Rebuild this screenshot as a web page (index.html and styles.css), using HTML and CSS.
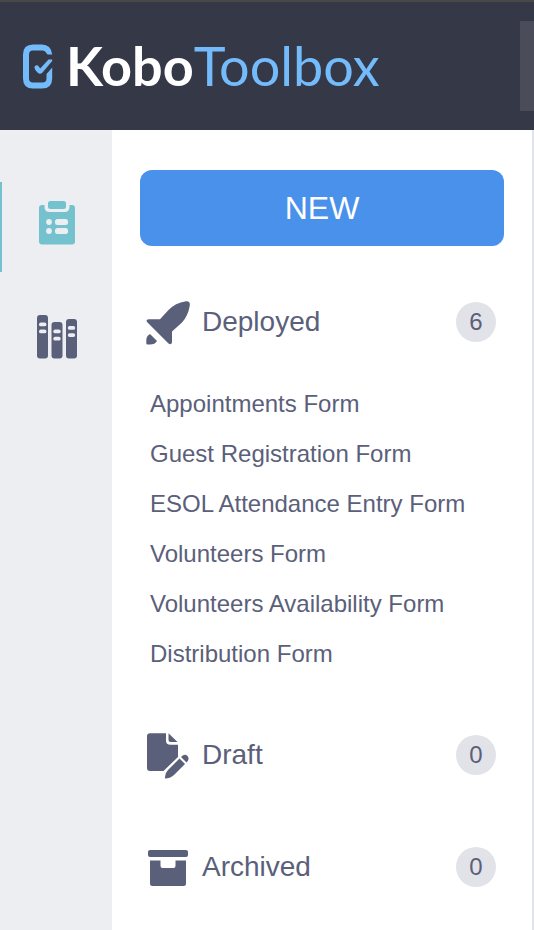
FILE: index.html
```html
<!DOCTYPE html>
<html lang="en">
<head>
<meta charset="utf-8">
<meta name="viewport" content="width=device-width, initial-scale=1">
<title>KoboToolbox</title>
<link rel="stylesheet" href="styles.css">
</head>
<body>
<header class="topbar">
  <a class="logo" href="#" aria-label="KoboToolbox">
    <svg class="logo-mark" viewBox="20 40 36 52" aria-hidden="true">
      <path fill="#73bbfa" d="M33 44.500 H42 Q51 44.500 52.200 54.500 H47.500 L45.500 52 Q45 50.500 42.500 50.500 H33 Q29 50.500 29 54.500 V78.500 Q29 82.500 33 82.500 H42.500 Q46.500 82.500 46.500 78.500 V74 L52.200 67.500 V78.500 Q52.200 88.500 42 88.500 H33 Q23 88.500 23 78.500 V54.500 Q23 44.500 33 44.500 Z"/>
      <path fill="#73bbfa" d="M48.500 59.500 H52.200 V61 L42.500 72.500 Q40 75 37.500 72.500 Q34.500 69.500 34.300 67 Q35.500 64.300 38 65.500 L40.200 68.500 Z"/>
    </svg>
    <span class="wordmark"><b>Kobo</b>Toolbox</span>
  </a>
  <div class="search"></div>
</header>
<div class="layout">
  <nav class="rail" aria-label="Sections">
    <a class="rail-item active" href="#" aria-label="Projects">
      <svg viewBox="26 197 60 60" aria-hidden="true">
        <path fill="#73c2ce" d="M42 205 H44.500 V207 Q44.500 212 49.500 212 H64.500 Q69.500 212 69.500 207 V205 H72 Q75 205 75 208 V241.500 Q75 244.500 72 244.500 H42 Q39 244.500 39 241.500 V208 Q39 205 42 205 Z"/>
        <rect x="48" y="201" width="18" height="8" rx="2.500" fill="#73c2ce"/>
        <g fill="#edeef2"><circle cx="49" cy="222" r="2.900"/><circle cx="49" cy="231" r="2.900"/><rect x="55" y="219" width="13" height="6" rx="2.500"/><rect x="55" y="228" width="13" height="6" rx="2.500"/></g>
      </svg>
    </a>
    <a class="rail-item" href="#" aria-label="Library">
      <svg viewBox="26 311 60 60" aria-hidden="true">
        <g fill="#5b607a"><rect x="37" y="315" width="11" height="43.500" rx="3"/><rect x="51.500" y="322" width="11" height="36.500" rx="3"/><rect x="66" y="319" width="11" height="39.500" rx="3"/></g>
        <g fill="#edeef2"><rect x="39" y="322.500" width="7.400" height="3.800" rx="1.900"/><rect x="39" y="329.500" width="7.400" height="3.800" rx="1.900"/><rect x="53.300" y="329.500" width="7.400" height="3.800" rx="1.900"/><rect x="53.300" y="336.800" width="7.400" height="3.800" rx="1.900"/><rect x="67.800" y="326" width="7.400" height="3.800" rx="1.900"/><rect x="67.800" y="333.200" width="7.400" height="3.800" rx="1.900"/></g>
      </svg>
    </a>
  </nav>
  <aside class="sidebar">
    <button class="new-button" type="button">NEW</button>
    <section>
      <h2 class="group">
        <svg viewBox="140 295 54 54" fill="#5b607a" aria-hidden="true"><path d="M186 301.200 Q190.800 301 189.700 306 Q188 316 182 322.500 L172 331.500 V342 Q171.500 345.500 168.500 343.500 L147 322 Q145.500 319.500 149 319.300 H160 L168.500 310 Q175 303 186 301.200 Z"/><path d="M150 334 L157 341 Q155 344.500 150 344.500 H147.500 Q146.300 344.500 146.300 343.300 V340 Q146.300 336 150 334 Z"/></svg>
        <span class="label">Deployed</span><span class="count">6</span>
      </h2>
      <ul class="forms">
        <li><a href="#">Appointments Form</a></li>
        <li><a href="#">Guest Registration Form</a></li>
        <li><a href="#">ESOL Attendance Entry Form</a></li>
        <li><a href="#">Volunteers Form</a></li>
        <li><a href="#">Volunteers Availability Form</a></li>
        <li><a href="#">Distribution Form</a></li>
      </ul>
    </section>
    <h2 class="group">
      <svg viewBox="140 728 54 54" fill="#5b607a" aria-hidden="true"><path d="M150 733.300 H166 V740.500 Q166 744.800 170.500 744.800 H178 V757 L163.500 771 H150 Q147 771 147 768 V736.300 Q147 733.300 150 733.300 Z"/><path d="M168.500 733.300 L177.500 742 H170.500 Q168.500 742 168.500 740 Z"/><path d="M179.500 758.500 L185 764 L174 775 Q170 778.500 165 778.500 Q164.500 773.500 168 770 Z"/><path d="M181 757 Q184.500 753.500 187.300 755.700 Q190.200 758.500 186.500 762.500 Z"/></svg>
      <span class="label">Draft</span><span class="count">0</span>
    </h2>
    <h2 class="group">
      <svg viewBox="140 840 54 54" fill="#5b607a" aria-hidden="true"><rect x="148" y="850" width="40" height="7" rx="2"/><path d="M150 860.500 H160.500 V866 Q160.500 868 162.500 868 H173.500 Q175.500 868 175.500 866 V860.500 H186 V883.500 Q186 886 183.500 886 H152.500 Q150 886 150 883.500 Z"/></svg>
      <span class="label">Archived</span><span class="count">0</span>
    </h2>
  </aside>
</div>
</body>
</html>
```
FILE: styles.css
```css
* { box-sizing: border-box; }

body {
  margin: 0;
  min-height: 100vh;
  display: flex;
  flex-direction: column;
  background: #fff;
  color: #5b607a;
  font-family: "Liberation Sans", Arial, sans-serif;
}

a { color: inherit; text-decoration: none; }

.topbar {
  display: flex;
  justify-content: space-between;
  height: 130px;
  padding: 19px 0 19px 20px;
  background: #353846;
  border-top: 2px solid #484848;
}

.logo {
  display: flex;
  align-items: center;
  gap: 10px;
  height: 90px;
}

.logo-mark { width: 36px; height: 52px; }

.wordmark {
  color: #73bbfa;
  font: 400 54px/60px Lato, sans-serif;
}

.wordmark b { color: #fff; font-weight: 700; }

.search {
  width: 14px;
  background: #4a4c59;
}

.layout {
  flex: 1;
  display: grid;
  grid-template-columns: 112px 1fr;
}

.rail {
  display: flex;
  flex-direction: column;
  gap: 24px;
  padding-top: 52px;
  background: #edeef2;
}

.rail-item {
  display: flex;
  align-items: center;
  justify-content: center;
  height: 90px;
  border: solid transparent;
  border-width: 0 2px;
}

.rail-item.active { border-left-color: #73c2ce; }

.rail-item svg { width: 60px; height: 60px; }

.sidebar {
  padding: 40px 28px 0;
  border-right: 2px solid #e2e3e9;
}

.new-button {
  display: block;
  width: 100%;
  height: 76px;
  margin-bottom: 20px;
  border: 0;
  border-radius: 12px;
  background: #4991ea;
  color: #fff;
  font: 32px/36px "Liberation Sans", Arial, sans-serif;
}

.group {
  display: flex;
  align-items: center;
  gap: 8px;
  height: 112px;
  margin: 0;
  padding-right: 8px;
  font-size: 28px;
  line-height: 32px;
  font-weight: 400;
}

.group svg { width: 54px; height: 54px; }

.count {
  width: 40px;
  height: 40px;
  margin-left: auto;
  border-radius: 50%;
  background: #e2e3e9;
  font-size: 24px;
  line-height: 40px;
  text-align: center;
}

.forms {
  margin: 1px 0 20px;
  padding: 0 0 0 10px;
  list-style: none;
  font-size: 24px;
  line-height: 50px;
}

.forms a { display: block; white-space: nowrap; }
```
